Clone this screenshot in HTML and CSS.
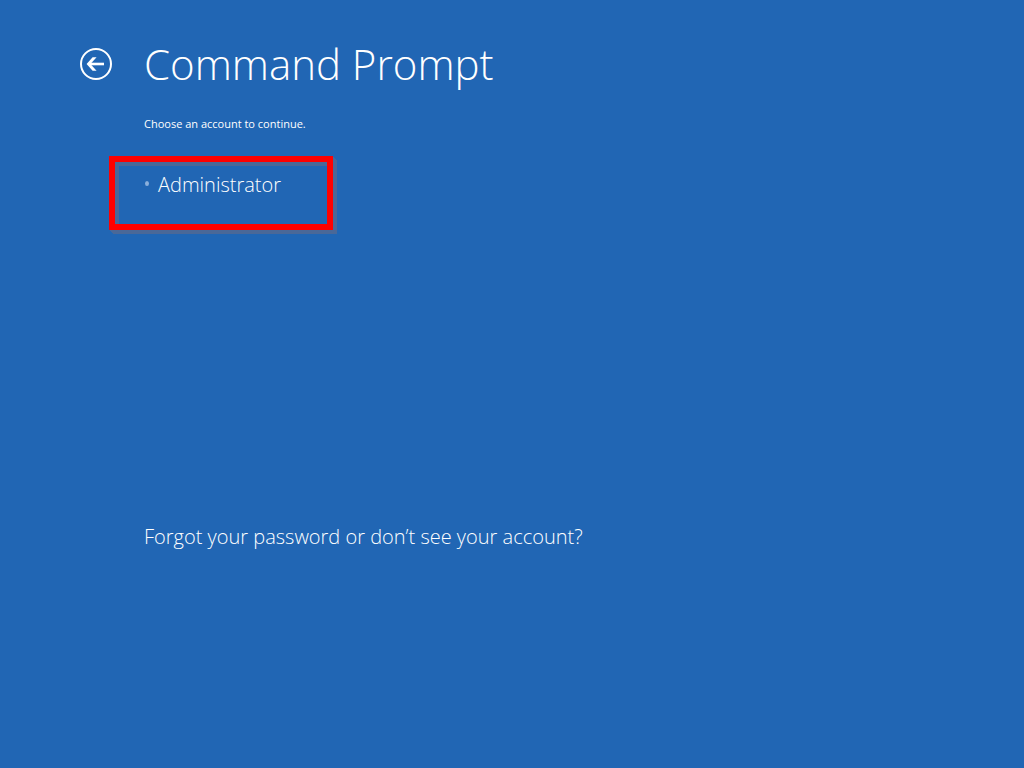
FILE: index.html
```html
<!DOCTYPE html>
<html lang="en">
<head>
<meta charset="utf-8">
<meta name="viewport" content="width=device-width, initial-scale=1">
<title>Command Prompt</title>
<link rel="stylesheet" href="styles.css">
</head>
<body>
<main class="screen">
  <header class="header">
    <button class="back" type="button" aria-label="Back">
      <svg class="back-icon" viewBox="0 0 32 32" aria-hidden="true">
        <circle cx="16" cy="16" r="15" fill="none" stroke="currentColor" stroke-width="2"/>
        <path d="M24 16H9" fill="none" stroke="currentColor" stroke-width="2.6"/>
        <path d="M12.6 9.3h4L10.4 16l6.2 6.7h-4L6.6 16z" fill="currentColor"/>
      </svg>
    </button>
    <h1 class="title">Command Prompt</h1>
  </header>
  <section class="content">
    <p class="hint">Choose an account to continue.</p>
    <ul class="accounts">
      <li class="account"><button class="account-button" type="button">Administrator</button></li>
    </ul>
    <a class="forgot" href="#">Forgot your password or don’t see your account?</a>
  </section>
</main>
</body>
</html>
```
FILE: styles.css
```css
* {
  box-sizing: border-box;
}

body {
  margin: 0;
  min-height: 100vh;
  background: #2166b4;
  color: #fff;
  font-family: "Open Sans", "Noto Sans", sans-serif;
  font-weight: 300;
}

button {
  border: 0;
  padding: 0;
  background: none;
  color: inherit;
  font: inherit;
  cursor: pointer;
}

.screen {
  padding: 32px 80px;
}

.header {
  display: flex;
  align-items: center;
  gap: 32px;
  height: 64px;
}

.back {
  display: block;
  width: 32px;
  height: 32px;
}

.back-icon {
  display: block;
}

.title {
  margin: 0;
  font-size: 42px;
  font-weight: 300;
  line-height: 64px;
  white-space: nowrap;
}

.content {
  padding: 20px 0 0 64px;
}

.hint {
  margin: 0;
  font-size: 11px;
  font-weight: 400;
  line-height: 16px;
}

.accounts {
  width: 224px;
  height: 74px;
  margin: 24px 0 0 -35px;
  padding: 8px 30px;
  border: 6px solid #f00;
  list-style: none;
  box-shadow:
    1px 1px #4a6898, 2px 2px #4a6898, 3px 3px #4a6898, 4px 4px #4a6898,
    inset 4px 4px #4a6898;
}

.account {
  display: flex;
  align-items: center;
  gap: 9px;
}

.account::before {
  content: "";
  width: 4px;
  height: 5px;
  margin-bottom: 3px;
  border-radius: 50%;
  background: #8bb0dc;
}

.account-button {
  font-size: 20px;
  line-height: 30px;
}

.forgot {
  display: inline-block;
  margin-top: 292px;
  color: inherit;
  font-size: 20px;
  line-height: 30px;
  text-decoration: none;
}
```
